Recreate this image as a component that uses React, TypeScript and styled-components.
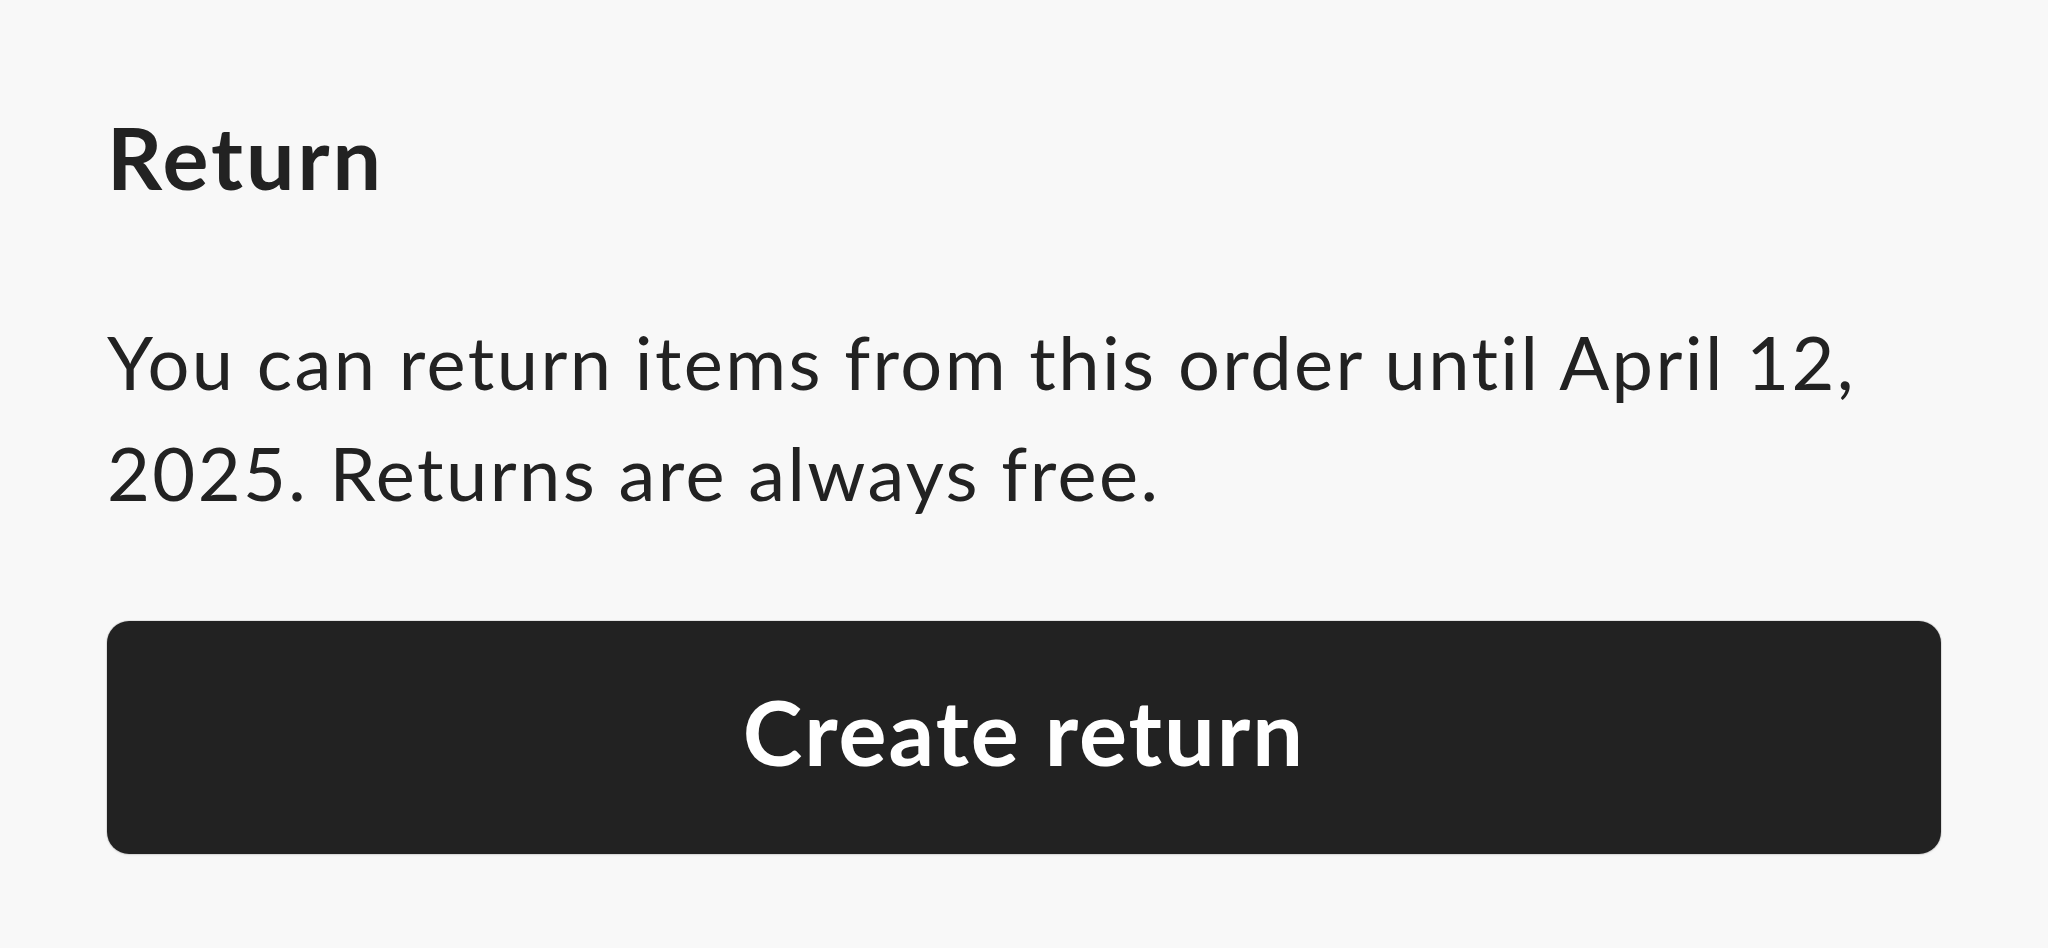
import React from "react";
import styled, { createGlobalStyle } from "styled-components";

const Global = createGlobalStyle`
  html, body { margin: 0; padding: 0; background: #f8f8f8; }
  body { font-family: Lato, "Noto Sans", sans-serif; color: #222222; }
`;

const Page = styled.main`
  box-sizing: border-box;
  width: 2048px;
  min-height: 948px;
  padding: 97px 107px 0 107px;
  display: flex;
  flex-direction: column;
`;

const Title = styled.h2`
  margin: 0;
  font-size: 86px;
  line-height: 120px;
  font-weight: 700;
  letter-spacing: 3px;
  color: #222222;
`;

const Body = styled.p`
  margin: 89px 0 0 0;
  font-size: 74px;
  line-height: 111px;
  font-weight: 400;
  letter-spacing: 2.4px;
  color: #222222;
`;

const Button = styled.button`
  box-sizing: border-box;
  margin-top: 93px;
  height: 233px;
  width: 100%;
  padding: 0 0 13px 0;
  border: none;
  border-radius: 22px;
  background: #222222;
  color: #ffffff;
  font-family: Lato, "Noto Sans", sans-serif;
  font-size: 90px;
  font-weight: 700;
  letter-spacing: 2px;
  box-shadow: 0 0 0 1px rgba(0, 0, 0, 0.08), 0 1px 3px rgba(0, 0, 0, 0.08);
  cursor: pointer;
`;

export default function App() {
  return (
    <>
      <Global />
      <Page>
        <Title>Return</Title>
        <Body>
          You can return items from this order until April 12, 2025. Returns are always free.
        </Body>
        <Button>Create return</Button>
      </Page>
    </>
  );
}
